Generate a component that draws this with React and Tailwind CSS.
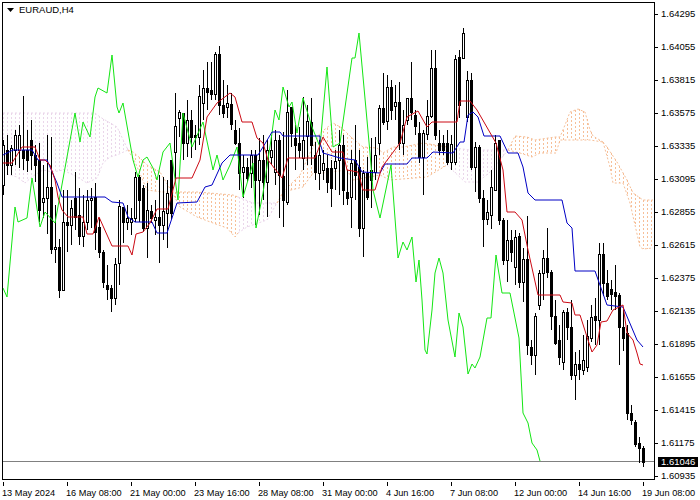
const prices = ["1.64295","1.64055","1.63815","1.63575","1.63335","1.63095","1.62855","1.62615","1.62375","1.62135","1.61895","1.61655","1.61415","1.61175","1.60935"];
const times = ["13 May 2024","16 May 08:00","21 May 00:00","23 May 16:00","28 May 08:00","31 May 00:00","4 Jun 16:00","7 Jun 08:00","12 Jun 00:00","14 Jun 16:00","19 Jun 08:00"];

// one row per bar, 4px apart from x=3: high, body top, body bottom, low, black body
const bars = [
  [140,145,185,195,0],[135,150,165,175,1],[145,148,165,175,0],[130,135,150,165,0],[125,135,150,168,0],[96,150,158,170,1],[130,150,160,172,1],[120,140,155,170,1],
  [145,155,165,182,1],[143,160,210,222,1],[165,198,202,218,0],[135,187,198,234,0],[137,187,249,254,1],[205,247,249,263,0],[239,247,290,298,1],[190,222,290,290,0],
  [190,222,225,252,1],[200,208,225,245,0],[172,198,217,230,1],[188,215,236,245,1],[195,222,236,247,0],[190,200,222,230,0],[188,198,200,228,0],[183,197,232,250,1],
  [218,227,252,258,1],[250,252,282,288,1],[265,285,289,300,1],[285,288,298,312,1],[258,264,298,305,0],[200,206,263,285,0],[207,207,222,243,1],[205,218,222,230,0],
  [208,218,222,235,0],[172,177,218,222,0],[175,177,200,222,1],[185,188,228,232,1],[183,210,228,258,0],[205,211,218,223,1],[200,217,220,235,0],[175,217,225,263,1],
  [177,211,225,240,0],[180,193,213,248,0],[160,160,213,220,1],[93,126,152,180,0],[110,112,118,137,0],[113,113,143,160,1],[100,120,143,157,0],[110,120,137,158,1],
  [125,135,137,150,1],[85,96,137,145,0],[70,88,103,120,0],[62,88,92,110,1],[62,90,94,100,1],[52,54,94,100,0],[46,54,105,115,1],[80,105,113,118,1],
  [85,103,107,118,0],[93,104,124,130,1],[120,130,143,145,1],[128,143,173,190,1],[155,167,172,198,0],[158,167,178,182,1],[150,155,173,188,0],[150,155,180,225,1],
  [138,160,180,215,0],[135,160,182,200,1],[140,150,182,217,0],[135,150,157,165,0],[130,140,172,185,0],[135,140,175,218,1],[132,176,200,227,1],[90,112,202,205,0],
  [107,107,133,147,1],[125,138,145,170,1],[127,143,150,158,1],[97,140,158,170,0],[105,121,136,165,0],[98,122,145,165,1],[142,155,172,180,1],[140,155,173,190,0],
  [150,163,170,180,0],[155,168,182,193,1],[160,168,188,207,1],[150,161,168,190,0],[130,145,160,195,0],[135,145,190,205,1],[170,192,198,205,1],[150,163,197,228,0],
  [125,160,175,200,1],[150,167,228,237,1],[170,173,228,257,0],[157,173,197,200,1],[138,170,180,208,1],[137,155,172,180,0],[105,108,143,155,0],[73,108,122,125,1],
  [75,87,121,130,0],[80,87,110,120,1],[85,102,106,120,0],[82,102,143,150,1],[110,125,143,155,0],[98,98,120,125,0],[62,98,112,120,1],[110,115,126,135,1],
  [122,133,157,163,1],[130,133,157,195,0],[100,116,134,140,0],[50,68,116,118,0],[50,68,135,140,1],[130,143,150,155,1],[135,143,150,155,1],[130,143,162,165,1],
  [135,144,162,170,0],[55,59,162,165,0],[50,57,105,118,1],[28,33,58,58,0],[71,80,117,122,0],[73,80,167,170,1],[142,147,167,192,0],[145,147,198,203,1],
  [190,198,219,247,1],[200,212,219,225,0],[170,187,215,229,0],[135,143,190,190,0],[140,140,220,225,1],[218,220,260,265,1],[220,240,260,282,0],[230,240,252,262,1],
  [230,237,267,285,0],[233,236,282,288,1],[248,259,282,302,0],[216,259,345,355,1],[340,347,355,365,1],[313,316,355,375,0],[270,273,305,310,0],[250,258,273,300,0],
  [228,258,272,278,1],[270,272,316,330,1],[300,316,343,345,1],[325,340,357,365,1],[310,312,362,370,0],[308,312,327,340,1],[300,327,375,380,1],[352,364,375,400,0],
  [350,364,369,380,1],[335,360,370,375,0],[320,336,367,372,0],[305,317,338,342,0],[298,316,320,345,1],[243,254,320,345,0],[243,254,283,296,1],[270,283,296,300,1],
  [280,289,294,310,1],[265,292,296,310,1],[293,295,327,365,1],[310,327,338,351,1],[325,333,413,420,1],[405,413,420,425,1],[420,422,444,447,1],[437,443,448,463,1],
  [446,448,462,467,1],
];

const chikou = [[3,288],[7,297],[15,207],[18,222],[27,218],[32,178],[40,227],[45,212],[55,223],[65,168],[75,113],[80,142],[83,122],[90,137],[95,97],[98,88],[107,93],[112,55],[117,107],[119,113],[123,103],[133,160],[138,177],[143,160],[147,157],[153,168],[157,180],[163,152],[170,143],[178,200],[183,113],[192,147],[203,122],[213,170],[217,155],[223,180],[230,165],[237,147],[243,197],[253,163],[256,228],[263,193],[272,133],[275,110],[279,120],[283,87],[289,107],[292,102],[297,133],[303,98],[312,127],[320,147],[327,67],[333,147],[340,143],[352,58],[355,58],[359,33],[370,153],[373,190],[380,218],[391,165],[398,258],[403,242],[407,250],[412,237],[416,282],[419,260],[422,300],[425,350],[427,354],[432,310],[435,273],[439,258],[443,273],[448,320],[455,357],[459,313],[463,327],[468,374],[472,364],[475,368],[480,357],[487,318],[491,318],[496,255],[502,293],[510,293],[519,338],[523,413],[528,423],[532,443],[537,450],[540,461]];
const kijun = [[3,155],[13,150],[32,150],[38,160],[47,160],[57,183],[62,197],[105,197],[112,202],[123,203],[128,217],[135,222],[152,222],[157,233],[167,233],[177,203],[197,202],[205,187],[212,185],[222,163],[230,155],[258,155],[263,147],[272,132],[280,132],[283,136],[320,136],[320,143],[323,153],[340,158],[355,160],[362,172],[380,173],[385,164],[407,164],[412,158],[427,158],[433,152],[453,153],[460,142],[464,142],[468,115],[473,112],[478,117],[484,136],[500,136],[508,153],[518,153],[523,167],[528,193],[535,200],[562,200],[567,223],[572,228],[575,271],[595,271],[607,305],[623,307],[637,340],[643,347]];
const tenkan = [[3,163],[12,163],[22,147],[35,147],[40,160],[45,160],[50,165],[55,180],[58,197],[62,210],[68,217],[83,217],[87,234],[93,234],[99,217],[112,246],[128,246],[132,255],[136,234],[143,232],[150,223],[157,209],[168,209],[176,178],[192,178],[200,160],[207,117],[217,103],[230,93],[235,97],[242,122],[252,122],[257,138],[263,143],[268,160],[282,178],[288,158],[315,158],[323,137],[332,152],[343,152],[347,170],[358,172],[363,190],[375,190],[382,167],[400,143],[407,117],[418,111],[427,127],[432,122],[457,122],[460,101],[470,101],[477,110],[496,143],[503,170],[507,212],[515,212],[522,220],[528,250],[538,295],[560,295],[563,302],[572,303],[575,315],[580,315],[588,340],[592,352],[597,345],[601,322],[607,321],[613,310],[623,305],[627,333],[633,340],[637,353],[640,364],[643,365]];

const thistle = "#ead6ea";
const sand = "#f6bf98";
const cloud = [
  { color: thistle, top: [[3,113],[95,113],[100,117],[117,127],[128,150]], bottom: [[3,173],[17,177],[25,183],[33,176],[43,170],[53,172],[63,170],[77,177],[87,183],[97,178],[103,163],[110,157],[117,155],[128,150]] },
  { color: sand, top: [[128,150],[133,152],[140,158],[147,165],[160,172],[172,192]], bottom: [[128,150],[135,162],[147,190],[162,192],[172,192]] },
  { color: sand, top: [[172,192],[197,192],[233,195],[238,197]], bottom: [[172,192],[180,207],[197,217],[213,223],[227,228],[235,237],[238,233]] },
  { color: thistle, top: [[238,197],[253,203],[267,203],[277,203]], bottom: [[238,233],[247,227],[267,220],[277,203]] },
  { color: sand, top: [[277,203],[287,188],[300,175],[310,153],[320,133],[333,123],[342,128],[352,138],[363,147],[377,148],[383,153],[393,147],[403,147],[423,143],[447,147]], bottom: [[277,203],[283,192],[303,187],[313,173],[323,173],[347,170],[353,180],[380,175],[390,180],[427,177],[447,165]] },
  { color: thistle, top: [[447,147],[470,150],[508,150]], bottom: [[447,165],[465,182],[478,182],[490,172],[500,160],[508,150]] },
  { color: sand, top: [[508,150],[515,136],[527,137],[535,140],[555,137],[560,137],[565,125],[570,112],[578,109],[585,112],[590,130],[593,136],[603,142]], bottom: [[508,150],[520,153],[532,157],[540,153],[556,153],[560,140],[590,140],[603,142]] },
  { color: sand, top: [[603,142],[607,147],[617,162],[627,180],[633,193],[643,200],[653,200]], bottom: [[603,142],[610,167],[613,183],[623,183],[630,203],[640,247],[643,249],[653,248]] },
];

const toPoints = (pts) => pts.map((p) => p.join(",")).join(" ");

const valueAt = (pts, x) => {
  for (let i = 1; i < pts.length; i++) {
    if (x <= pts[i][0]) {
      const [x0, y0] = pts[i - 1];
      const [x1, y1] = pts[i];
      return y0 + ((y1 - y0) * (x - x0)) / (x1 - x0 || 1);
    }
  }
  return pts[pts.length - 1][1];
};

const Cloud = ({ color, top, bottom }) => {
  const hatch = [];
  for (let x = 3; x <= 653; x += 4) {
    if (x < top[0][0] || x > top[top.length - 1][0]) continue;
    const y1 = Math.round(valueAt(top, x));
    const y2 = Math.round(valueAt(bottom, x));
    hatch.push(`M${x + 0.5} ${y1}V${y2}`);
  }
  return (
    <g stroke={color} fill="none">
      <path d={hatch.join("")} strokeDasharray="2 2" shapeRendering="crispEdges" />
      <polyline points={toPoints(top)} strokeDasharray="2 2" />
      <polyline points={toPoints(bottom)} strokeDasharray="2 2" />
    </g>
  );
};

const Chart = () => (
  <svg width="651" height="476" viewBox="3 3 651 476" className="block">
    {cloud.map((c, i) => (
      <Cloud key={i} {...c} />
    ))}
    <line x1="3" y1="461.5" x2="654" y2="461.5" stroke="#808080" shapeRendering="crispEdges" />
    {bars.map(([high, top, bottom, low, black], i) => {
      const x = 3 + i * 4;
      return (
        <g key={i} shapeRendering="crispEdges">
          <line x1={x + 0.5} y1={high} x2={x + 0.5} y2={low} stroke="#000" />
          <rect x={x - 0.5} y={top + 0.5} width="2" height={Math.max(bottom - top, 1)} fill={black ? "#000" : "#fff"} stroke="#000" />
        </g>
      );
    })}
    <polyline points={toPoints(chikou)} fill="none" stroke="#14e614" />
    <polyline points={toPoints(kijun)} fill="none" stroke="#0000c4" />
    <polyline points={toPoints(tenkan)} fill="none" stroke="#cc0a14" />
  </svg>
);

export default function App() {
  return (
    <div className="w-[700px] h-[500px] overflow-hidden bg-white pl-[2px] pt-[2px] font-['Liberation_Sans',sans-serif] text-[9.5px] leading-[12px] text-black">
      <div className="flex">
        <div className="relative w-[653px] h-[478px] border border-black">
          <Chart />
          <div className="absolute left-[4px] top-[1px] flex items-center gap-[5px]">
            <svg width="7" height="4" viewBox="0 0 7 4">
              <path d="M0 0H7L3.5 4Z" fill="#000" />
            </svg>
            <span>EURAUD,H4</span>
          </div>
        </div>
        <div className="relative flex-1 flex flex-col gap-[21px] pt-[6px]">
          {prices.map((p) => (
            <div key={p} className="flex h-[12px] items-center">
              <div className="w-[3px] h-px bg-black" />
              <span className="ml-[3px]">{p}</span>
            </div>
          ))}
          <div className="absolute left-[3px] top-[455px] w-[40px] h-[10px] bg-black pl-[3px] text-white leading-[10px] font-medium">
            1.61046
          </div>
        </div>
      </div>
      <div className="flex pl-px text-[9.2px]">
        {times.map((t) => (
          <div key={t} className="w-[64px] shrink-0 whitespace-nowrap">
            <div className="w-px h-[4px] bg-black" />
            <span className="block -ml-px mt-px">{t}</span>
          </div>
        ))}
      </div>
    </div>
  );
}
